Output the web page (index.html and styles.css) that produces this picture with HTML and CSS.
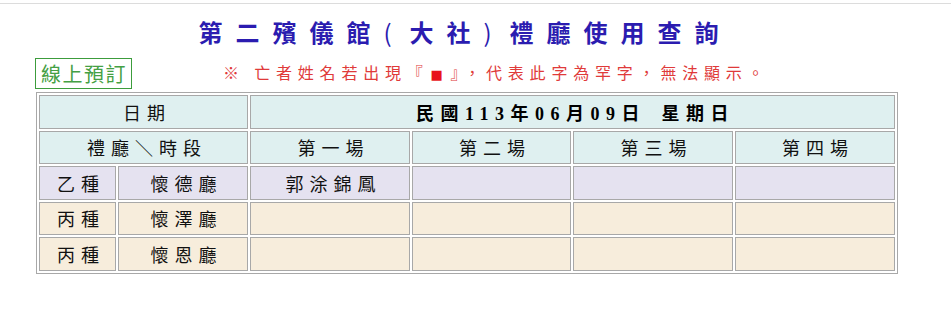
FILE: index.html
```html
<!DOCTYPE html>
<html lang="zh-Hant">
<head>
<meta charset="utf-8">
<title>第二殯儀館(大社)禮廳使用查詢</title>
<link rel="stylesheet" href="styles.css">
</head>
<body>
<div class="topline"></div>
<div class="page">
  <h1 class="title">第二殯儀館<span class="paren">(</span>大社<span class="paren">)</span>禮廳使用查詢</h1>
  <div class="toolbar">
    <a class="book-btn" href="#">線上預訂</a>
    <p class="notice">※ 亡者姓名若出現『<span class="sq">■</span>』，代表此字為罕字，無法顯示。</p>
  </div>
  <table class="grid">
    <colgroup>
      <col class="c-kind">
      <col class="c-hall">
      <col class="c-slot">
      <col class="c-slot2">
      <col class="c-slot">
      <col class="c-slot2">
    </colgroup>
    <tr class="head">
      <td colspan="2">日期</td>
      <td colspan="4" class="date">民國113年06月09日&ensp;星期日</td>
    </tr>
    <tr class="head">
      <td colspan="2">禮廳＼時段</td>
      <td>第一場</td>
      <td>第二場</td>
      <td>第三場</td>
      <td>第四場</td>
    </tr>
    <tr class="row-b">
      <td>乙種</td>
      <td>懷德廳</td>
      <td>郭涂錦鳳</td>
      <td></td>
      <td></td>
      <td></td>
    </tr>
    <tr class="row-c">
      <td>丙種</td>
      <td>懷澤廳</td>
      <td></td>
      <td></td>
      <td></td>
      <td></td>
    </tr>
    <tr class="row-c">
      <td>丙種</td>
      <td>懷恩廳</td>
      <td></td>
      <td></td>
      <td></td>
      <td></td>
    </tr>
  </table>
</div>
</body>
</html>
```

FILE: styles.css
```css
html, body {
  margin: 0;
  padding: 0;
  background: #ffffff;
}

body {
  font-family: "Liberation Serif", "Noto Sans CJK TC", serif;
  color: #000;
}

.topline {
  margin-top: 3px;
  border-top: 1px solid #dcdcdc;
}

.page {
  width: 934px;
}

.title {
  margin: 13px 0 0 0;
  text-align: center;
  font-family: "Noto Sans CJK TC", sans-serif;
  font-size: 24px;
  line-height: 30px;
  font-weight: 700;
  letter-spacing: 13px;
  color: #2b1cb0;
  padding-right: 4px;
}

.title .paren {
  display: inline-block;
  width: 26px;
  text-align: left;
  letter-spacing: 0;
  font-weight: 400;
}

.toolbar {
  display: flex;
  align-items: center;
  margin-top: 11px;
  padding-left: 35px;
}

.book-btn {
  display: block;
  border: 1px solid #3c9c3c;
  color: #44a044;
  text-decoration: none;
  font-family: "Noto Sans CJK TC", sans-serif;
  font-size: 20px;
  line-height: 29px;
  letter-spacing: 1.5px;
  padding: 0 4px 0 5px;
  white-space: nowrap;
}

.notice {
  margin: 0 0 0 91px;
  font-family: "Noto Sans CJK TC", sans-serif;
  font-size: 16px;
  line-height: 20px;
  letter-spacing: 5.8px;
  color: #e03a3a;
}

.notice .sq {
  display: inline-block;
  width: 16px;
  text-align: center;
  color: #e8141a;
  font-family: "DejaVu Sans", sans-serif;
  font-size: 13px;
  letter-spacing: 0;
  margin-right: 5.8px;
}

.grid {
  margin: 3px auto 0 auto;
  width: 861px;
  table-layout: fixed;
  border-collapse: separate;
  border-spacing: 2px;
  border: 1px solid #a8a8a8;
}

.c-kind { width: 77px; }
.c-hall { width: 130px; }
.c-slot { width: 160px; }
.c-slot2 { width: 159px; }

.grid td {
  border: 1px solid #a8a8a8;
  height: 31.5px;
  padding: 0;
  text-align: center;
  vertical-align: middle;
  font-size: 18px;
  letter-spacing: 6px;
  padding-left: 6px;
  color: #111;
  white-space: nowrap;
}

.grid .head td {
  background: #dff0f0;
}

.grid .row-b td {
  background: #e5e2f0;
}

.grid .row-c td {
  background: #f7eddc;
}

.grid td.date {
  font-weight: 700;
  color: #000;
  letter-spacing: 6.5px;
}
```
